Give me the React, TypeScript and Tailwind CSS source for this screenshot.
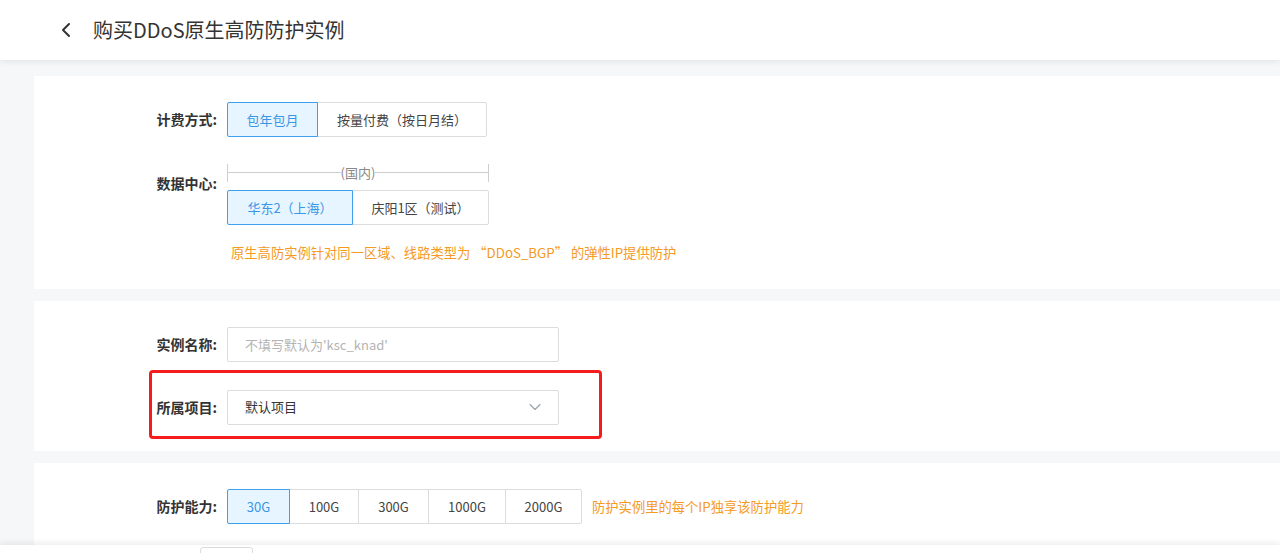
import { ChevronLeft, ChevronDown } from "lucide-react";

const font = { fontFamily: '"Noto Sans CJK SC", "Liberation Sans", sans-serif' };

function Seg({ items, widths, active }: { items: string[]; widths: string[]; active: number }) {
  return (
    <div className="flex">
      {items.map((t, i) => (
        <div
          key={t}
          className={
            "h-[35px] flex items-center justify-center text-[13px] border -ml-px first:ml-0 first:rounded-l-[2px] last:rounded-r-[2px] " +
            widths[i] +
            (i === active
              ? " relative z-10 bg-[#e6f5ff] border-[#3ea0ee] text-[#3a96e6]"
              : " bg-white border-[#dcdcdc] text-[#444]")
          }
        >
          {t}
        </div>
      ))}
    </div>
  );
}

function Label({ text, className = "" }: { text: string; className?: string }) {
  return (
    <div className={"w-[193px] pr-[10px] text-right text-[14px] font-bold text-[#333] shrink-0 " + className}>{text}</div>
  );
}

export default function App() {
  return (
    <div style={font} className="h-[553px] overflow-hidden bg-[#f6f7f9] relative">
      {/* Header */}
      <div className="h-[60px] bg-white flex items-center shadow-[0_2px_6px_rgba(0,0,0,0.08)] relative z-10">
        <ChevronLeft className="ml-[54px] w-[24px] h-[24px] text-[#333]" strokeWidth={2} />
        <div className="ml-[15px] text-[20px] text-[#333] leading-none">购买DDoS原生高防防护实例</div>
      </div>

      <div className="pl-[34px] pt-[16px] flex flex-col gap-[12px]">
        {/* Card 1 */}
        <div className="bg-white h-[213px] pt-[26px]">
          <div className="flex items-center">
            <Label text="计费方式:" />
            <Seg items={["包年包月", "按量付费（按日月结）"]} widths={["w-[91px]", "w-[170px]"]} active={0} />
          </div>
          <div className="flex items-start mt-[26px]">
            <Label text="数据中心:" className="mt-[10px]" />
            <div className="flex flex-col">
              <div className="relative h-[27px] w-[262px] flex items-center">
                <div className="absolute left-0 top-[1px] h-[18px] w-px bg-[#cfcfcf]" />
                <div className="absolute right-0 top-[1px] h-[18px] w-px bg-[#cfcfcf]" />
                <div className="flex-1 h-px bg-[#cfcfcf] -mt-[8px]" />
                <span className="text-[13px] text-[#888] leading-none -mt-[8px]">(国内)</span>
                <div className="flex-1 h-px bg-[#cfcfcf] -mt-[8px]" />
              </div>
              <Seg items={["华东2（上海）", "庆阳1区（测试）"]} widths={["w-[126px]", "w-[137px]"]} active={0} />
            </div>
          </div>
          <div className="ml-[197px] mt-[18px] text-[13.3px] text-[#f59a23]">
            原生高防实例针对同一区域、线路类型为 “DDoS_BGP” 的弹性IP提供防护
          </div>
        </div>

        {/* Card 2 */}
        <div className="bg-white h-[150px] pt-[26px]">
          <div className="flex items-center">
            <Label text="实例名称:" />
            <div className="w-[332px] h-[35px] border border-[#dcdcdc] rounded-[2px] flex items-center px-[17px] text-[13px] text-[#b4b4b4]">
              不填写默认为'ksc_knad'
            </div>
          </div>
          <div className="mt-[8px] ml-[115px] w-[453px] h-[69px] pt-[5px] border-[3px] border-[#f41c1c] rounded-[4px] flex items-center">
            <div className="w-[75px] text-right pr-[10px] text-[14px] font-bold text-[#333] shrink-0 whitespace-nowrap">所属项目:</div>
            <div className="w-[332px] h-[35px] border border-[#dcdcdc] rounded-[2px] flex items-center justify-between pl-[17px] pr-[13px] text-[13px] text-[#333]">
              默认项目
              <ChevronDown className="w-[20px] h-[20px] text-[#9aa0a8]" strokeWidth={1.3} />
            </div>
          </div>
        </div>

        {/* Card 3 */}
        <div className="bg-white h-[120px] pt-[26px]">
          <div className="flex items-center">
            <Label text="防护能力:" />
            <Seg
              items={["30G", "100G", "300G", "1000G", "2000G"]}
              widths={["w-[63px]", "w-[70px]", "w-[71px]", "w-[78px]", "w-[77px]"]}
              active={0}
            />
            <div className="ml-[10px] text-[13.3px] text-[#f59a23]">防护实例里的每个IP独享该防护能力</div>
          </div>
        </div>
      </div>

      {/* Bottom bar */}
      <div className="absolute left-0 right-0 top-[545px] h-[20px] bg-white shadow-[0_-2px_6px_rgba(0,0,0,0.08)]">
        <div className="absolute left-[200px] top-[2px] w-[53px] h-[30px] border border-[#dcdcdc] rounded-[3px] bg-white" />
      </div>
    </div>
  );
}
